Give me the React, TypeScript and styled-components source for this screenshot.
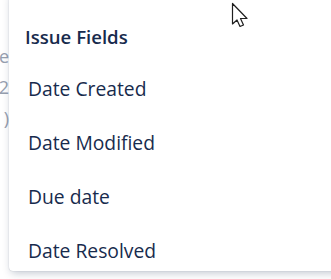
import styled, { createGlobalStyle } from 'styled-components';

const GlobalStyle = createGlobalStyle`
  html, body {
    margin: 0;
    padding: 0;
    background: #ffffff;
  }
  body {
    font-family: 'Open Sans', 'Noto Sans', sans-serif;
  }
`;

const Page = styled.div`
  position: relative;
  width: 331px;
  height: 279px;
  overflow: hidden;
  background: #ffffff;
`;

// Page content behind the dropdown, mostly hidden
const Behind = styled.div`
  display: flex;
  flex-direction: column;
  align-items: flex-end;
  width: 9px;
  padding-top: 45px;
  gap: 8px;
  overflow: hidden;
`;

const BehindLine = styled.span`
  font-size: 18px;
  line-height: 23px;
  color: #97a0af;
  white-space: nowrap;
`;

const Dropdown = styled.div`
  position: absolute;
  left: 9px;
  top: -10px;
  width: 340px;
  height: 281px;
  box-sizing: border-box;
  padding-top: 35px;
  background: #ffffff;
  border-radius: 4px;
  box-shadow: 0 4px 8px -2px rgba(9, 30, 66, 0.25), 0 0 1px rgba(9, 30, 66, 0.31);
`;

const GroupTitle = styled.h3`
  margin: 0 0 0 16px;
  font-size: 18.6px;
  line-height: 24px;
  font-weight: 600;
  color: #172b4d;
`;

const ItemList = styled.ul`
  list-style: none;
  margin: 12px 0 0;
  padding: 0;
`;

const Item = styled.li`
  padding: 0 19px;
  height: 54px;
  display: flex;
  align-items: center;
  font-size: 19.3px;
  color: #172b4d;
`;

const Cursor = styled.svg`
  position: absolute;
  left: 231px;
  top: 2px;
  width: 20px;
  height: 28px;
`;

const fields = ['Date Created', 'Date Modified', 'Due date', 'Date Resolved'];

export default function App() {
  return (
    <Page>
      <GlobalStyle />
      <Behind>
        <BehindLine>Type</BehindLine>
        <BehindLine>2</BehindLine>
        <BehindLine>)</BehindLine>
      </Behind>
      <Dropdown>
        <GroupTitle>Issue Fields</GroupTitle>
        <ItemList>
          {fields.map((f) => (
            <Item key={f}>{f}</Item>
          ))}
        </ItemList>
      </Dropdown>
      <Cursor viewBox="0 0 20 28">
        <path
          d="M1.5 1.5 L1.5 22 L6 18 L9 24.5 L12.5 23 L9.5 16.5 L16 16.5 Z"
          fill="#ffffff"
          stroke="#1f1f1f"
          strokeWidth="1.2"
          strokeLinejoin="round"
        />
      </Cursor>
    </Page>
  );
}
